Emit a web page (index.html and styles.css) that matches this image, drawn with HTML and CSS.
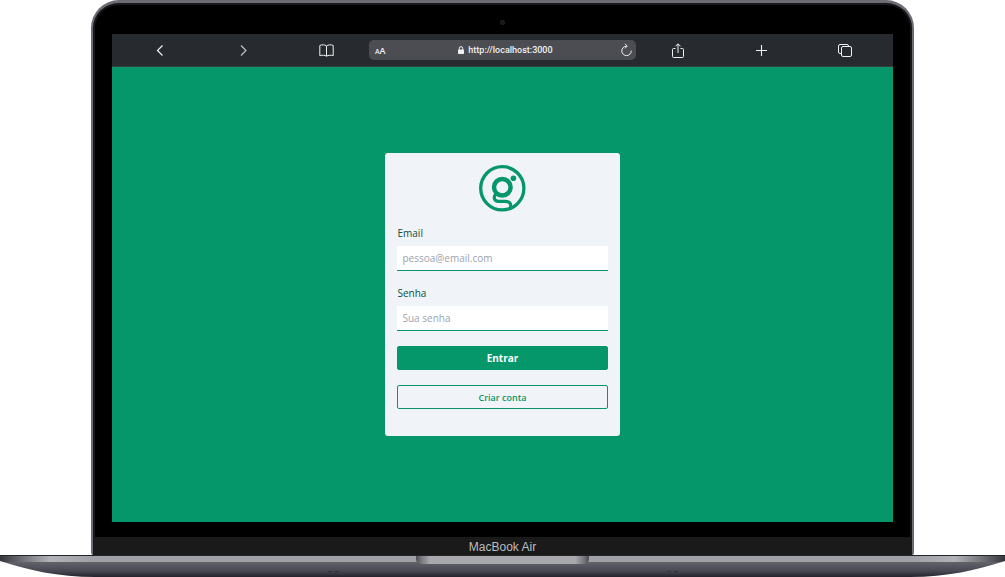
FILE: index.html
```
<!DOCTYPE html>
<html lang="pt-BR">
<head>
<meta charset="utf-8">
<meta name="viewport" content="width=device-width, initial-scale=1">
<title>Entrar</title>
<link rel="stylesheet" href="styles.css">
</head>
<body>
<div class="laptop">
  <div class="lid">
    <div class="bezel"><span class="camera"></span></div>
    <div class="screen">
      <nav class="toolbar" aria-label="Navegador">
        <button class="tool" type="button" aria-label="Voltar"><svg width="16" height="16" viewBox="0 0 16 16"><path d="M10.500 3.500 5.500 8.500l5 5" stroke-width="1.200"/></svg></button>
        <button class="tool dim" type="button" aria-label="Avançar"><svg width="16" height="16" viewBox="0 0 16 16"><path d="m5 3.500 5 5-5 5" stroke-width="1.100"/></svg></button>
        <button class="tool" type="button" aria-label="Favoritos"><svg width="16" height="16" viewBox="0 0 16 16"><path d="M7.500 4C6 2.500 2.500 2.500.8 3.500v10.200c1.700-.7 5.200-.7 6.700.5 1.500-1.200 5-1.200 6.700-.5V3.500C12.500 2.500 9 2.500 7.500 4v10.200"/></svg></button>
        <div class="address">
          <span class="reader"><small>A</small>A</span>
          <span class="url"><svg width="6" height="8" viewBox="0 0 6 8"><rect y="3.500" width="6" height="4.500" rx=".8" fill="currentColor" stroke="none"/><path d="M1.300 4V2.300a1.700 1.700 0 0 1 3.400 0V4"/></svg>http://localhost:3000</span>
          <button class="tool" type="button" aria-label="Recarregar"><svg width="12" height="14" viewBox="0 0 12 14"><path d="M6.500 3.200a4.700 4.700 0 1 0 4.700 4.500M5 .8l2.200 2.400L5 5.400"/></svg></button>
        </div>
        <button class="tool" type="button" aria-label="Compartilhar"><svg width="16" height="16" viewBox="0 0 16 16"><path d="M5.500 6.500h-2a1 1 0 0 0-1 1v7a1 1 0 0 0 1 1h9a1 1 0 0 0 1-1v-7a1 1 0 0 0-1-1h-2M8 11V2M5.500 4.300 8 1.800l2.500 2.500"/></svg></button>
        <button class="tool" type="button" aria-label="Nova aba"><svg width="16" height="16" viewBox="0 0 16 16"><path d="M8.500 3v11M3 8.500h11" stroke-width="1.100"/></svg></button>
        <button class="tool" type="button" aria-label="Abas"><svg width="16" height="16" viewBox="0 0 16 16"><rect x="4.500" y="4.500" width="10" height="10" rx="1.500"/><path d="M4.500 11.500H3A1.500 1.500 0 0 1 1.500 10V4A1.500 1.500 0 0 1 3 2.500h7A1.500 1.500 0 0 1 11.500 4v.5"/></svg></button>
      </nav>
      <main class="page">
        <form class="card">
          <svg class="logo" width="47" height="47" viewBox="0 0 47 47" role="img" aria-label="Logo">
            <circle cx="23.300" cy="23.300" r="21.600" stroke-width="3.300"/>
            <circle cx="23.300" cy="22.300" r="8.300" stroke-width="4.500"/>
            <circle cx="34.400" cy="13.300" r="2.800" fill="currentColor" stroke="none"/>
            <path d="M17 29c-3 3-2 7.300 2.500 7.300h6.500c4.300 0 6.500 2.200 5.500 6" stroke-width="3.200"/>
          </svg>
          <label for="email">Email</label>
          <input id="email" type="email" placeholder="pessoa@email.com">
          <label for="senha">Senha</label>
          <input id="senha" type="password" placeholder="Sua senha">
          <button class="button primary" type="submit">Entrar</button>
          <button class="button outline" type="button">Criar conta</button>
        </form>
      </main>
    </div>
    <div class="chin">MacBook Air</div>
  </div>
  <div class="base">
    <svg class="hull" viewBox="0 0 1005 22" preserveAspectRatio="none" aria-hidden="true">
      <defs>
        <linearGradient id="edge"><stop offset="0" stop-color="#34343c"/><stop offset=".025" stop-color="#77787e"/><stop offset=".05" stop-color="#b2b3b8"/><stop offset=".09" stop-color="#a0a1a6"/><stop offset=".91" stop-color="#a0a1a6"/><stop offset=".95" stop-color="#b2b3b8"/><stop offset=".975" stop-color="#77787e"/><stop offset="1" stop-color="#34343c"/></linearGradient>
        <linearGradient id="under" x2="0" y2="1"><stop offset="0" stop-color="#61626a"/><stop offset=".6" stop-color="#484852"/><stop offset="1" stop-color="#24222d"/></linearGradient>
        <clipPath id="shape"><path d="M0 0h1005v6c-28 9-58 16-95 16H95C58 22 28 15 0 6Z"/></clipPath>
      </defs>
      <g clip-path="url(#shape)">
        <path fill="url(#under)" d="M0 7h1005v15H0z"/>
        <path fill="url(#edge)" d="M0 0h1005v7H0z"/>
        <path fill="#222228" d="M0 0h1005v1H0z"/>
        <path fill="#303039" d="M328 16h4v1h-4zm7 0h4v1h-4zm332 0h4v1h-4zm7 0h4v1h-4z"/>
      </g>
    </svg>
    <span class="notch"></span>
  </div>
</div>
</body>
</html>
```
FILE: styles.css
```
* { box-sizing: border-box; }
body {
  margin: 0;
  background: #fff;
  font-family: "Open Sans", "Noto Sans", sans-serif;
  font-size: 10px;
}
button { font: inherit; cursor: pointer; }
.laptop {
  display: flex;
  flex-direction: column;
  min-height: 100vh;
}
.lid {
  flex: 1;
  display: flex;
  flex-direction: column;
  margin: 0 9.100%;
  overflow: hidden;
  background: #000;
  border: 3px solid #6d6c75;
  border-width: 3px 2px 0;
  border-radius: 28px 28px 4px 4px;
  box-shadow: inset 0 0 0 2px #18181c;
}
.bezel {
  height: 31px;
  display: flex;
  justify-content: center;
  align-items: center;
  padding-top: 7px;
}
.camera {
  width: 5px;
  height: 5px;
  border: 1px solid #26262a;
  border-radius: 50%;
  background: #141416;
}
.screen {
  flex: 1;
  display: flex;
  flex-direction: column;
  margin: 0 19px 15px;
}
.toolbar {
  height: 33px;
  display: grid;
  grid-template-columns: repeat(3, 5fr) 16fr repeat(3, 5fr);
  align-items: center;
  padding: 0 6px;
  background: #272b2f;
  border-bottom: 1px solid #3a3d40;
  color: #f0f0f1;
}
.toolbar svg {
  display: block;
  fill: none;
  stroke: currentColor;
  stroke-width: 1;
}
.tool {
  justify-self: center;
  padding: 0;
  border: 0;
  background: none;
  color: inherit;
}
.dim { color: #c5c6c8; }
.address {
  height: 20px;
  display: grid;
  grid-template-columns: 16px 1fr 12px;
  align-items: center;
  padding: 0 4px 0 6px;
  border-radius: 5px;
  background: #4b4d52;
}
.reader { font-size: 9px; font-weight: 600; }
.reader small { font-size: 7px; }
.url {
  display: flex;
  justify-content: center;
  align-items: center;
  gap: 4px;
  font-family: Roboto, "Open Sans", sans-serif;
  font-size: 9px;
  font-weight: 500;
}
.page {
  flex: 1;
  display: flex;
  justify-content: center;
  align-items: center;
  background: #059669;
}
.card {
  width: 30%;
  min-width: 180px;
  display: flex;
  flex-direction: column;
  padding: 12px 12px 27px;
  border-radius: 3px;
  background: #f0f4f9;
  color: #064e3b;
}
.logo {
  align-self: center;
  margin-bottom: 13px;
  fill: none;
  stroke: #059669;
  color: #059669;
}
.card label {
  line-height: 16px;
  margin-bottom: 5px;
}
.card input {
  width: 100%;
  height: 25px;
  margin-bottom: 14px;
  padding: 0 5px;
  border: 0;
  border-bottom: 1px solid #059669;
  border-radius: 0;
  background: #fff;
  color: #064e3b;
  font: inherit;
}
.card input::placeholder { color: #9ca3af; opacity: 1; }
.button {
  height: 24px;
  padding: 0;
  border: 1px solid #059669;
  border-radius: 2px;
}
.primary {
  margin: 1px 0 15px;
  background: #059669;
  color: #fff;
  font-weight: 700;
}
.outline {
  background: transparent;
  color: #059669;
  font-size: 9px;
  font-weight: 600;
}
.chin {
  height: 19px;
  background: #1a1a1a;
  color: #bdbdbf;
  font: 12px/20px "Liberation Sans", Arial, sans-serif;
  text-align: center;
}
.base {
  height: 21px;
  display: grid;
  justify-items: center;
}
.base > * { grid-area: 1 / 1; }
.hull { width: 100%; height: 22px; margin-top: -1px; }
.notch {
  width: 173px;
  height: 8px;
  border-radius: 0 0 5px 5px;
  background: linear-gradient(90deg, #4c4c53, #77777c 3%, #a8a8ad 8%, #a8a8ad 92%, #77777c 97%, #4c4c53);
  z-index: 1;
}
```
